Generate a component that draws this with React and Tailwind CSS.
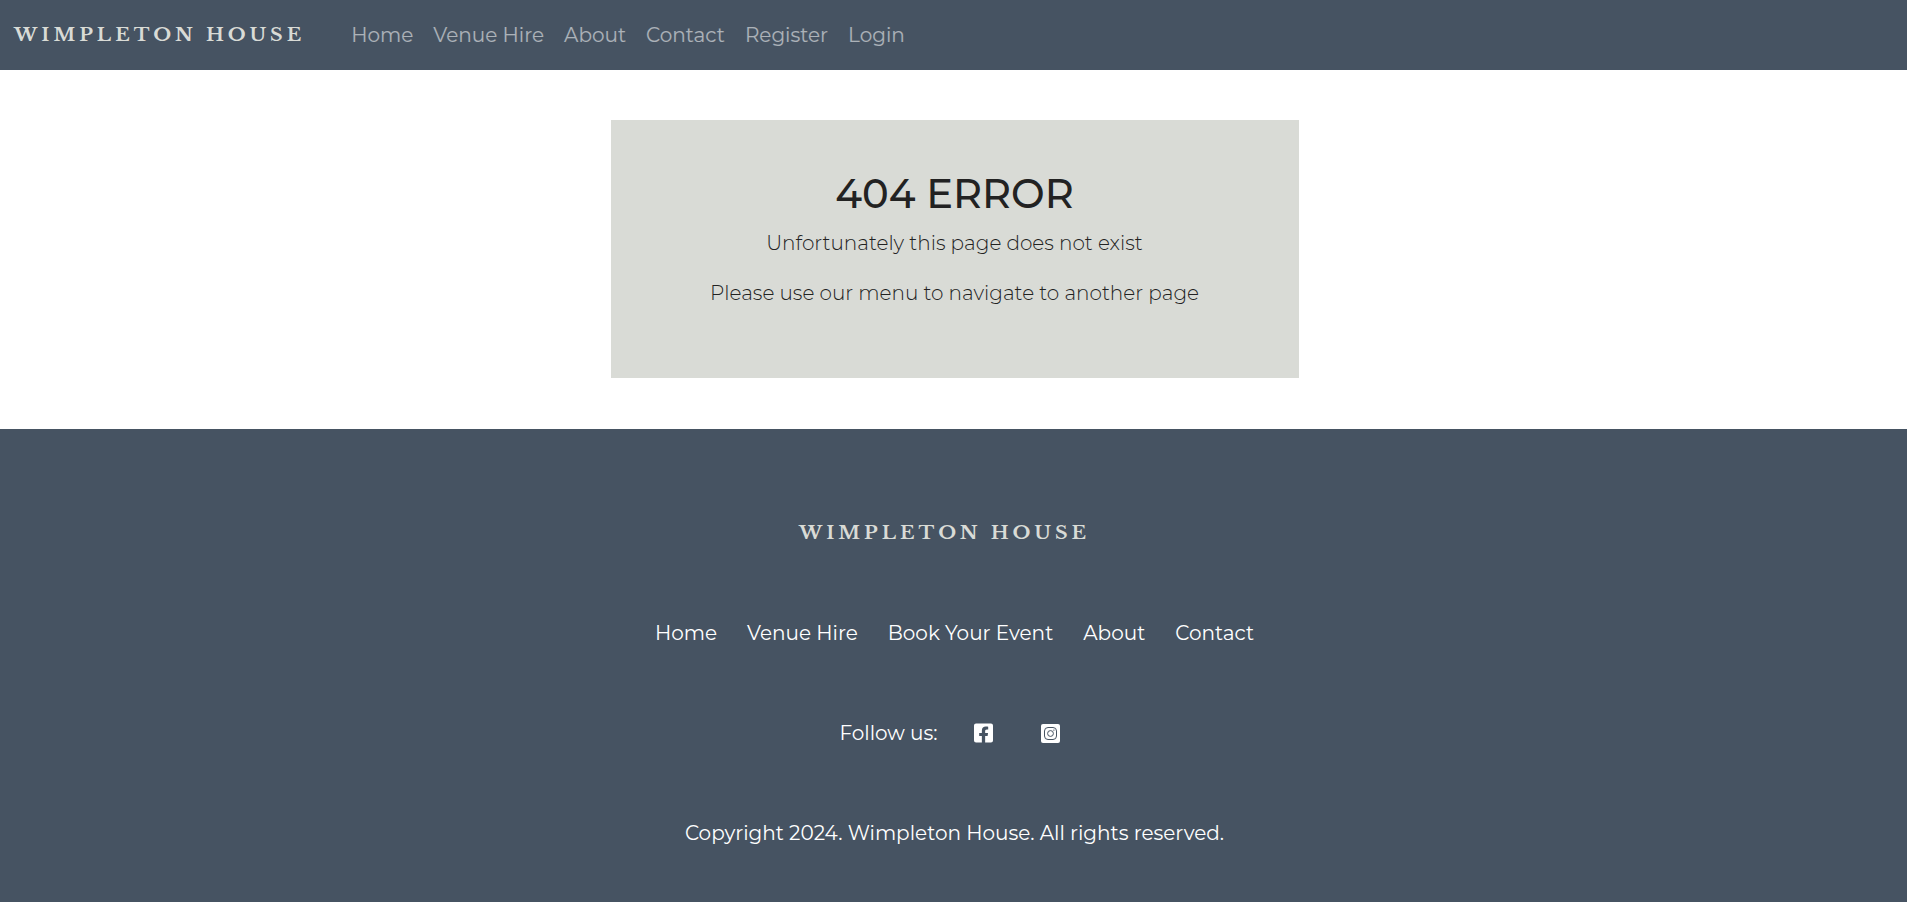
import React from 'react';
import { FaFacebookSquare } from 'react-icons/fa';

const navLinks = ['Home', 'Venue Hire', 'About', 'Contact', 'Register', 'Login'];
const footerLinks = ['Home', 'Venue Hire', 'Book Your Event', 'About', 'Contact'];

function Brand() {
  return (
    <a
      href="#home"
      className="whitespace-nowrap font-['Libre_Baskerville','Liberation_Serif',serif] text-[19px] leading-[30px] font-bold tracking-[4px] text-[#d9dbd6]"
    >
      WIMPLETON HOUSE
    </a>
  );
}

function InstagramIcon({ className }) {
  return (
    <svg viewBox="0 0 19 19" className={className} aria-hidden="true">
      <rect width="19" height="19" rx="2" fill="#ffffff" />
      <g fill="none" stroke="#465362" strokeWidth="1">
        <rect x="3.5" y="3.5" width="12" height="12" rx="3.5" />
        <circle cx="9.5" cy="9.5" r="2.9" />
      </g>
      <circle cx="12.9" cy="6.1" r="0.7" fill="#465362" />
    </svg>
  );
}

export default function App() {
  return (
    <div className="flex min-h-screen flex-col bg-white font-['Montserrat','Inter',sans-serif] text-[20px] leading-[30px] text-[#222222]">
      <header className="flex flex-wrap items-center bg-[#465362] px-3.5 py-5">
        <Brand />
        <nav aria-label="Main" className="ml-[46px]">
          <ul className="flex flex-wrap gap-x-5 text-white/55">
            {navLinks.map((label) => (
              <li key={label}>
                <a href="#nav">{label}</a>
              </li>
            ))}
          </ul>
        </nav>
      </header>

      <main className="flex justify-center pt-[50px] pb-[51px] pl-0.5">
        <section className="w-full max-w-[688px] bg-[#d9dbd6] p-[50px] text-center font-[350]">
          <h1 className="mb-2.5 text-[40px] leading-[48px] font-medium">404 ERROR</h1>
          <p className="mb-5">Unfortunately this page does not exist</p>
          <p className="mb-5">Please use our menu to navigate to another page</p>
        </section>
      </main>

      <footer className="flex grow flex-col items-center gap-[70px] bg-[#465362] pt-[88px] pb-[50px] pl-0.5 text-white">
        <div className="pr-5">
          <Brand />
        </div>
        <nav aria-label="Footer">
          <ul className="flex flex-wrap justify-center gap-x-[30px]">
            {footerLinks.map((label) => (
              <li key={label}>
                <a href="#nav">{label}</a>
              </li>
            ))}
          </ul>
        </nav>
        <div className="flex items-center pr-2.5">
          <span>Follow us:</span>
          <a href="#facebook" aria-label="Facebook" className="ml-9">
            <FaFacebookSquare className="h-[22px] w-[19px]" />
          </a>
          <a href="#instagram" aria-label="Instagram" className="ml-12">
            <InstagramIcon className="size-[19px]" />
          </a>
        </div>
        <p>Copyright 2024. Wimpleton House. All rights reserved.</p>
      </footer>
    </div>
  );
}
